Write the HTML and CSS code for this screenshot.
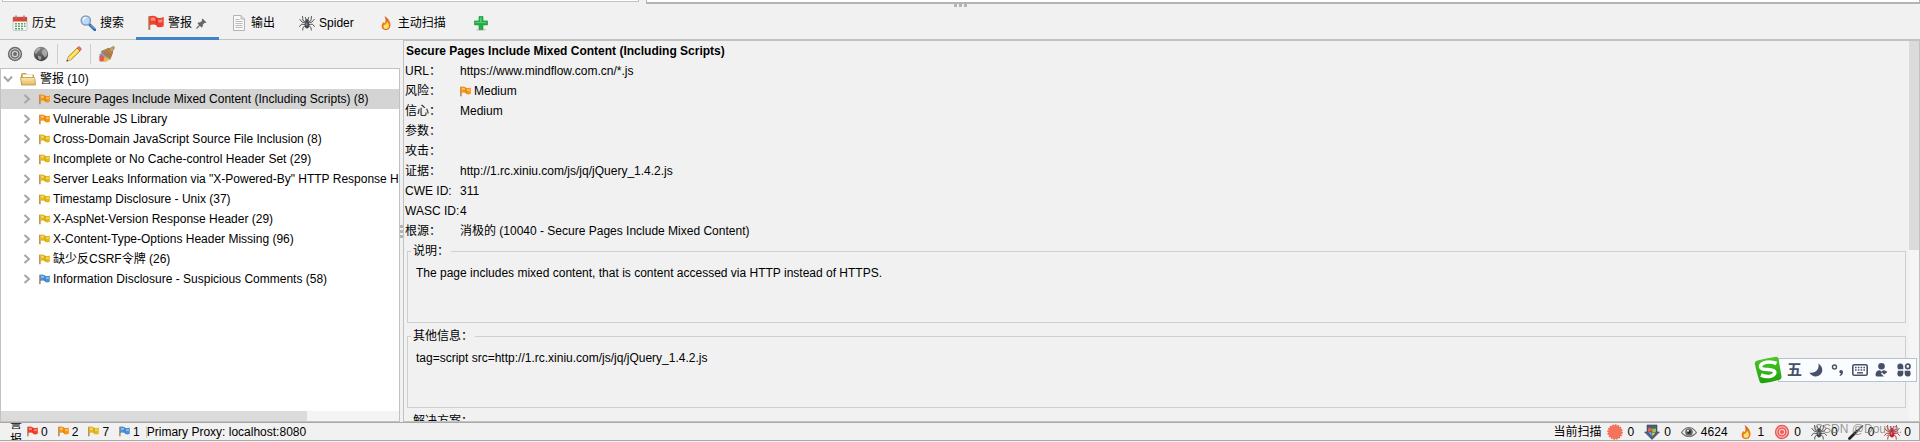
FILE: index.html
```
<!DOCTYPE html>
<html lang="zh-CN">
<head>
<meta charset="utf-8">
<title>警报</title>
<link rel="stylesheet" href="styles.css">
</head>
<body>
<svg class="defs" aria-hidden="true">
  <defs>
    <linearGradient id="g-fire" x1="0" y1="0" x2="0" y2="1"><stop offset="0" stop-color="#c8441c"/><stop offset=".5" stop-color="#f08418"/><stop offset="1" stop-color="#e85a10"/></linearGradient>
    <linearGradient id="g-grey" x1="0" y1="0" x2="0" y2="1"><stop offset="0" stop-color="#8a8a8a"/><stop offset="1" stop-color="#3c3c3c"/></linearGradient>
    <linearGradient id="g-ime" x1="0" y1="0" x2="0" y2="1"><stop offset="0" stop-color="#4cc828"/><stop offset="1" stop-color="#1fa00c"/></linearGradient>
    <linearGradient id="g-folder" x1="0" y1="0" x2="0" y2="1"><stop offset="0" stop-color="#fbe9ae"/><stop offset="1" stop-color="#e2bb5c"/></linearGradient>
    <symbol id="flag" viewBox="0 0 11 11">
      <path d="M.2.8v9.400h1.400V.8z" fill="#b07a48"/>
      <path class="flag-body" d="M1 .8Q3.500-.1 5.800 1.200v.6Q8.500 2.400 10.800 1.400V7.800Q8.500 9 6 8V6.900Q3.500 6.200 1 7z"/>
      <path d="M2 2q1.800-.5 3 .2v1.900q-1.500-.5-3 0zM7 3.200q1.500.3 2.800-.2v1.800q-1.300.5-2.800.2z" fill="#fff" opacity=".4"/>
      <path d="M5.900 1.500v6" stroke="#000" stroke-opacity=".18" stroke-width=".7"/>
    </symbol>
    <symbol id="spider" viewBox="0 0 16 16">
      <g fill="none" stroke="currentColor" stroke-width=".9"><path d="M6.500 7 4 5.500 3.500 1M9.500 7 12 5.500l.5-4.500M6.500 8 3 7 .5 4M9.500 8 13 7l2.500-3M6 9.500l-3.500-.3-2.200 2.600M10 9.500l3.500-.3 2.200 2.600M6.500 10.500 4 12.500l-.3 3M9.500 10.500l2.500 2 .3 3M7 4.500l-.8-2.500M9 4.500l.8-2.500"/></g>
      <ellipse cx="8" cy="10" rx="2.300" ry="3.400" fill="currentColor"/><circle cx="8" cy="5.800" r="1.900" fill="currentColor"/>
      <ellipse cx="7.500" cy="9.300" rx=".9" ry="1.500" fill="#fff" opacity=".35"/>
    </symbol>
    <symbol id="fire" viewBox="0 0 16 16">
      <path d="M6.500 1c3 2 6.500 5.500 6 9.500-.4 3-2.300 4.500-4.500 4.500-2.500 0-4.300-1.700-4.300-4.100 0-2 1-2.900 1.700-3.900l.9 1.300C8 6.500 8 3.500 6.500 1z" fill="url(#g-fire)"/>
      <path d="M9 6.500c1.200 2 2.300 3.500 1.800 5.300-.4 1.500-1.500 2.200-2.700 2.200-1.500 0-2.600-1-2.600-2.300 0-1 .4-1.500.8-2 1.400.6 2.500-1 2.700-3.200z" fill="#ffe66c"/>
    </symbol>
    <symbol id="target" viewBox="0 0 16 16">
      <circle cx="8" cy="8" r="7.200" fill="currentColor"/><circle cx="8" cy="8" r="5.200" fill="none" stroke="#fff" stroke-opacity=".7"/><circle cx="8" cy="8" r="2.600" fill="none" stroke="#fff" stroke-opacity=".7" stroke-width="1.200"/>
    </symbol>
    <symbol id="chevron" viewBox="0 0 8 10"><path d="M1.500 1 6 5 1.500 9" fill="none" stroke="#a6a6a6" stroke-width="2"/></symbol>
  </defs>
</svg>

<div class="upper">
  <div class="upper-left"></div>
  <div class="upper-right"></div>
</div>

<nav class="tabs">
  <span class="grip grip-h"></span>
  <button class="tab"><svg class="icon" viewBox="0 0 16 16"><rect x="1" y="2" width="14" height="13.500" rx="1" fill="#f7f7f7" stroke="#aaa" stroke-width=".6"/><path d="M1 2h14v4.500H1z" fill="#dd4434"/><path d="M4 .5v3M12 .5v3" stroke="#8b8b8b" stroke-width="1.500"/><path d="M3 8h2v1.600H3zM6 8h2v1.600H6zM9 8h2v1.600H9zM3 10.500h2v1.600H3zM6 10.500h2v1.600H6zM9 10.500h2v1.600H9zM12 8h1.500v1.600H12zM12 10.500h1.500v1.600H12zM3 13h2v1.400H3zM6 13h2v1.400H6zM9 13h2v1.400H9z" fill="#55a868"/></svg>历史</button>
  <button class="tab"><svg class="icon" viewBox="0 0 16 16"><path d="m9.500 9.500 5.300 5.200" stroke="#2f66ae" stroke-width="2.800" stroke-linecap="round"/><path d="m10.500 10 4 4" stroke="#8bb8ee"/><circle cx="5.800" cy="5.500" r="4.600" fill="#b7d9fa" stroke="#8b9db5" stroke-width="1.500"/><path d="M3 5.500c.2-2 1.500-3 3.200-2.800" stroke="#fff" stroke-width="1.300" fill="none"/></svg>搜索</button>
  <button class="tab active"><svg class="icon flag-red" viewBox="0 0 11 11"><use href="#flag"/></svg>警报<svg class="pin" viewBox="0 0 11 11"><path d="m6.500.5 4 4-1.200.5-1 .1-1.500 1.600-.1 2L5.500 9.500 1.500 5.500l.9-1 2-.2L6 2.800l-.1-1z" fill="#62676b"/><path d="M3.800 7.200.5 10.500" stroke="#62676b" stroke-width="1.200"/></svg></button>
  <button class="tab"><svg class="icon" viewBox="0 0 16 16"><path d="M2.500.5H10L13.500 4v11.500h-11z" fill="#f8f8f8" stroke="#b4b4b4"/><path d="M10 .5V4h3.500" fill="#ddd" stroke="#b4b4b4"/><path d="M4.500 4.500h4M4.500 6.500h7M4.500 8.500h7M4.500 10.500h7M4.500 12.500h7" stroke="#bdbdbd"/></svg>输出</button>
  <button class="tab"><svg class="icon dark"><use href="#spider"/></svg>Spider</button>
  <button class="tab"><svg class="icon"><use href="#fire"/></svg>主动扫描</button>
  <button class="tab tab-add" aria-label="添加"><svg class="icon" viewBox="0 0 16 16"><ellipse cx="8" cy="14.800" rx="5" ry="1" fill="#ccc"/><path d="M6 1.500h4v4.400h4.500v4H10v4.600H6V9.900H1.500v-4H6z" fill="#20b244" stroke="#188c34" stroke-width=".6"/><path d="M7 2.500h1.500V7H13v1H2.500V7H7z" fill="#7be08c" opacity=".6"/></svg></button>
</nav>

<main class="work">
  <section class="side">
    <div class="toolbar">
      <button class="tool" aria-label="范围"><svg class="icon grey"><use href="#target"/></svg></button>
      <button class="tool" aria-label="站点"><svg class="icon" viewBox="0 0 16 16"><circle cx="8" cy="8" r="7.200" fill="url(#g-grey)"/><path d="M3 3.500c1.500-1.500 3-2 4.500-1.500L6.800 4l-2 1.500L3.500 8 1.800 7zM9.500 4l3-1 1.800 3-.3 3-2 2.500L10 9 8.500 7zM5 9.500l3 1 .5 2L7 14.500 5 12z" fill="#bbb" opacity=".75"/></svg></button>
      <span class="sep"></span>
      <button class="tool" aria-label="编辑"><svg class="icon" viewBox="0 0 16 16"><path d="m.8 15.200 1.400-4.400L11 2l3 3-8.800 8.800z" fill="#f7d232" stroke="#a47a18" stroke-width=".7"/><path d="m3.500 12.300 8.800-8.800" stroke="#fff3a0" stroke-width="1.200"/><path d="m11 2 1.300-1.200c1-.7 3.500 1.500 2.800 2.800L14 5z" fill="#e47a70" stroke="#a04030" stroke-width=".5"/><path d="m.8 15.200 1.400-4.400 3 3z" fill="#efcfa0"/><path d="m.5 15.500.7-2 1.300 1.300z" fill="#333"/></svg></button>
      <span class="sep"></span>
      <button class="tool" aria-label="清除"><svg class="icon" viewBox="0 0 16 16"><path d="m.5 8 4-2.500 5 6L8 15l-3 .8L.5 14z" fill="#78a8e8"/><path d="m.5 10 2.500-1.500 2.500 3.500-1.500 3.500H.5z" fill="#f05a3c"/><path d="m5 12 3-1 2 3-2.500 1.500H5z" fill="#f4b040"/><path d="M2 5.500 9 2.500 13.500 7 11 13.500z" fill="#b98a4c" stroke="#866030" stroke-width=".6"/><path d="m4.500 5.500 6.500 5.500M7 4.500l5 5" stroke="#7d5830" stroke-width=".7"/><path d="m9 2.500 2.500-.3L14.500.3l1.200 1.200-2 3L13.500 7z" fill="#c9a063" stroke="#866030" stroke-width=".6"/></svg></button>
    </div>
    <div class="tree">
      <ul class="rows" role="tree">
        <li class="row root"><svg class="arrow open"><use href="#chevron"/></svg><svg class="folder" viewBox="0 0 16 14"><path d="M1.500 12.500V2.500q0-1 1-1H6l1.500 1.500h6v9z" fill="#dcb764" stroke="#b48a3c" stroke-width=".8"/><path d="M3 2.500h9.500V6H3z" fill="#fff"/><path d="M.5 5.500h13.300q1 0 1 1l.7 6.500H1.700z" fill="url(#g-folder)" stroke="#bd9345" stroke-width=".8"/></svg>警报 (10)</li>
        <li class="row selected"><svg class="arrow"><use href="#chevron"/></svg><svg class="flag flag-orange"><use href="#flag"/></svg>Secure Pages Include Mixed Content (Including Scripts) (8)</li>
        <li class="row"><svg class="arrow"><use href="#chevron"/></svg><svg class="flag flag-orange"><use href="#flag"/></svg>Vulnerable JS Library</li>
        <li class="row"><svg class="arrow"><use href="#chevron"/></svg><svg class="flag flag-yellow"><use href="#flag"/></svg>Cross-Domain JavaScript Source File Inclusion (8)</li>
        <li class="row"><svg class="arrow"><use href="#chevron"/></svg><svg class="flag flag-yellow"><use href="#flag"/></svg>Incomplete or No Cache-control Header Set (29)</li>
        <li class="row"><svg class="arrow"><use href="#chevron"/></svg><svg class="flag flag-yellow"><use href="#flag"/></svg>Server Leaks Information via "X-Powered-By" HTTP Response H</li>
        <li class="row"><svg class="arrow"><use href="#chevron"/></svg><svg class="flag flag-yellow"><use href="#flag"/></svg>Timestamp Disclosure - Unix (37)</li>
        <li class="row"><svg class="arrow"><use href="#chevron"/></svg><svg class="flag flag-yellow"><use href="#flag"/></svg>X-AspNet-Version Response Header (29)</li>
        <li class="row"><svg class="arrow"><use href="#chevron"/></svg><svg class="flag flag-yellow"><use href="#flag"/></svg>X-Content-Type-Options Header Missing (96)</li>
        <li class="row"><svg class="arrow"><use href="#chevron"/></svg><svg class="flag flag-yellow"><use href="#flag"/></svg>缺少反CSRF令牌 (26)</li>
        <li class="row"><svg class="arrow"><use href="#chevron"/></svg><svg class="flag flag-blue"><use href="#flag"/></svg>Information Disclosure - Suspicious Comments (58)</li>
      </ul>
      <div class="scroll-x"><div class="thumb-x"></div></div>
    </div>
  </section>
  <div class="divider"><span class="grip grip-v"></span></div>
  <section class="detail">
    <div class="detail-body">
      <h1 class="title">Secure Pages Include Mixed Content (Including Scripts)</h1>
      <dl class="props">
        <dt>URL：</dt><dd>https://www.mindflow.com.cn/*.js</dd>
        <dt>风险：</dt><dd><svg class="flag flag-orange"><use href="#flag"/></svg>Medium</dd>
        <dt>信心：</dt><dd>Medium</dd>
        <dt>参数：</dt><dd></dd>
        <dt>攻击：</dt><dd></dd>
        <dt>证据：</dt><dd>http://1.rc.xiniu.com/js/jq/jQuery_1.4.2.js</dd>
        <dt>CWE ID:</dt><dd>311</dd>
        <dt>WASC ID:</dt><dd>4</dd>
        <dt>根源：</dt><dd>消极的 (10040 - Secure Pages Include Mixed Content)</dd>
      </dl>
      <fieldset class="group"><legend>说明：</legend><p>The page includes mixed content, that is content accessed via HTTP instead of HTTPS.</p></fieldset>
      <fieldset class="group"><legend>其他信息：</legend><p>tag=script src=http://1.rc.xiniu.com/js/jq/jQuery_1.4.2.js</p></fieldset>
      <fieldset class="group"><legend>解决方案：</legend></fieldset>
    </div>
    <div class="scroll-y"><div class="thumb-y"></div></div>
  </section>
</main>

<footer class="status">
  <span class="label">警报</span>
  <span class="count"><svg class="flag flag-red"><use href="#flag"/></svg>0</span>
  <span class="count"><svg class="flag flag-orange"><use href="#flag"/></svg>2</span>
  <span class="count"><svg class="flag flag-yellow"><use href="#flag"/></svg>7</span>
  <span class="count"><svg class="flag flag-blue"><use href="#flag"/></svg>1</span>
  <span class="proxy">Primary Proxy: localhost:8080</span>
  <div class="scans">
    <span class="scan-label">当前扫描</span>
    <span class="scan"><svg class="icon" viewBox="0 0 16 16"><circle cx="8" cy="8" r="6.700" fill="#f4745c" stroke="#ee6a50" stroke-width="2" stroke-dasharray="1.700 .9"/><circle cx="8" cy="8" r="6.300" fill="#f5735a"/></svg>0</span>
    <span class="scan"><svg class="icon" viewBox="0 0 16 16"><path d="M3 1h10v7h2.500L8 15.500.5 8H3z" fill="#4e5e74" stroke="#36445a" stroke-width=".6"/><path d="M4 4.500q2-1.200 3.600-.3v3.400q-1.800-.7-3.600.2z" fill="#f0623a"/><path d="M8.200 4.400q1.800.7 3.800-.2v3.500q-2 1-3.800.1z" fill="#8ccb4a"/><path d="M4.500 8.400q1.600-.7 3.100-.1v4z" fill="#4ea6ec"/><path d="M8.200 8.400q1.700.7 3.400 0l-3.400 4z" fill="#f8c838"/></svg>0</span>
    <span class="scan"><svg class="icon" viewBox="0 0 16 16"><path d="M.5 8.500Q4 3.500 8 3.500t7.500 5Q12 12.500 8 12.500T.5 8.500z" fill="#eee" stroke="#777" stroke-width="1.200"/><circle cx="8" cy="8" r="3.800" fill="#666"/><circle cx="8" cy="8" r="1.800" fill="#222"/><circle cx="7" cy="6.800" r="1" fill="#fff"/></svg>4624</span>
    <span class="scan"><svg class="icon"><use href="#fire"/></svg>1</span>
    <span class="scan"><svg class="icon red"><use href="#target"/></svg>0</span>
    <span class="scan"><svg class="icon dark"><use href="#spider"/></svg>0</span>
    <span class="scan"><svg class="icon" viewBox="0 0 16 16"><path d="M1.500 14.500 9 7" stroke="#222" stroke-width="2.800" stroke-linecap="round"/><path d="m9 7 6-5.500" stroke="#555" stroke-width="1.500"/><path d="m7.500 7 1.700 1.800" stroke="#aaa"/></svg>0</span>
    <span class="scan"><svg class="icon crimson"><use href="#spider"/></svg>0</span>
  </div>
</footer>

<div class="watermark">CSDN @Douya.</div>

<div class="ime">
  <svg class="ime-logo" viewBox="0 0 28 28"><path d="M3.500 4.500Q12 2.500 22 .8q2-.3 2.500 1.700l3 18q.3 2.500-2 3.300-8 2.500-17 3.400-2.500.3-3-2Q2.500 16 .8 8 .5 5.300 3.500 4.500z" fill="url(#g-ime)"/><path d="M22.500 7.500Q16 4.800 9.500 7q-3.500 1.700-2.800 4.300.8 2 7.300 2.200 6.500.3 6.800 2.700.2 2.800-4.300 4-4.500 1-9.500-1.200" fill="none" stroke="#fff" stroke-width="3.600"/></svg>
  <div class="ime-bar">
    <span class="ime-mode">五</span>
    <svg class="icon" viewBox="0 0 16 16"><path d="M10.500 1.500c5 3.500 5 9.500.5 12-3.500 2-8 .5-9.500-3 5.500 1.200 10-2.500 9-9z" fill="#46506a"/></svg>
    <svg class="icon" viewBox="0 0 16 16"><circle cx="4.500" cy="5" r="2" fill="none" stroke="#46506a" stroke-width="1.400"/><path d="M9.500 8.800c.8-1.500 3.500-1 3.500 1.200 0 2-1.200 3.500-3 4l-.5-.8q1.200-.6 1.400-1.800c-1.200.2-2-1.400-1.400-2.600z" fill="#46506a"/></svg>
    <svg class="icon" viewBox="0 0 16 16"><rect x=".8" y="2.800" width="14.400" height="10.400" rx="1.500" fill="#fff" stroke="#46506a" stroke-width="1.600"/><path d="M3 5.500h10M3 8h10" stroke="#46506a" stroke-width="1.400" stroke-dasharray="1.600 1.200"/><path d="M5 10.800h6" stroke="#46506a" stroke-width="1.400"/></svg>
    <svg class="icon" viewBox="0 0 16 16"><circle cx="7.500" cy="4.300" r="3.300" fill="#46506a"/><path d="M1.500 12.500Q2 8 6 8.200l1.500 1.500L9 8.200q4 0 4.500 2.800l-4 3.500H3q-1.500 0-1.500-2z" fill="#46506a"/><path d="m7.500 11 2.500 2.500 4.500-3.500" fill="none" stroke="#fff" stroke-width="1.500"/></svg>
    <svg class="icon" viewBox="0 0 16 16"><path d="M2 7.300Q1 5 1.500 3q1-1.800 3-1.500 2.800.3 2.800 3v2.800zM2 8.700Q1 11 1.500 13q1 1.800 3 1.500 2.800-.3 2.800-3V8.700zM14 8.700q1 2.300.5 4.300-1 1.800-3 1.500-2.800-.3-2.800-3V8.700z" fill="#46506a"/><circle cx="11.800" cy="4.400" r="2.200" fill="none" stroke="#46506a" stroke-width="1.700"/></svg>
  </div>
</div>
</body>
</html>
```
FILE: styles.css
```
* { box-sizing: border-box; }

body {
  margin: 0;
  height: 100vh;
  display: flex;
  flex-direction: column;
  overflow: hidden;
  position: relative;
  background: #f1f1f1;
  color: #000;
  font: 12px/20px "Liberation Sans", Arial, "Noto Sans CJK SC", sans-serif;
}

button {
  border: 0;
  padding: 0;
  background: none;
  color: inherit;
  font: inherit;
}

svg { flex: none; display: block; }
.defs { position: absolute; width: 0; height: 0; }
.icon { width: 16px; height: 16px; }
.flag { width: 11px; height: 11px; }

.flag-red { --flag: #f2402c; }
.flag-orange { --flag: #f79410; }
.flag-yellow { --flag: #e6b818; }
.flag-blue { --flag: #4a90d8; }
.flag-body { fill: var(--flag); }
.dark { color: #45494d; }
.grey { color: #6c6c6c; }
.red { color: #ee5a56; }
.crimson { color: #c8202c; }

/* bottom edge of the panels above */
.upper { display: flex; gap: 7px; height: 4px; }
.upper-left {
  flex: 0 0 33.2%;
  height: 2px;
  margin-left: 2px;
  background: #fff;
  border: 1px solid #c2c2c2;
  border-top: 0;
}
.upper-right {
  flex: 1;
  background: #fff;
  border: solid #b4b4b4;
  border-width: 0 1px 2px;
}

/* tabs */
.tabs {
  display: flex;
  height: 36px;
  border-bottom: 1px solid #c2c2c2;
  position: relative;
}
.tab {
  display: flex;
  align-items: center;
  gap: 4px;
  height: 36px;
  padding: 5px 12px 0;
  border-bottom: 3px solid transparent;
}
.tab.active { border-bottom-color: #4083c9; }
.tab-add { padding-left: 15px; }
.pin { width: 11px; height: 11px; }

.grip { display: block; background-color: transparent; }
.grip-h {
  position: absolute;
  left: 50%;
  top: 0;
  width: 13px;
  height: 3px;
  margin-left: -6px;
  background: repeating-linear-gradient(90deg, #b4b4b4 0 3px, transparent 3px 5px);
}
.grip-v {
  width: 3px;
  height: 13px;
  background: repeating-linear-gradient(#b4b4b4 0 3px, transparent 3px 5px);
}

/* split area */
.work { flex: 1; min-height: 0; display: flex; }
.side { flex: 0 0 400px; min-width: 0; display: flex; flex-direction: column; }
.toolbar { display: flex; align-items: center; gap: 8px; height: 28px; padding-left: 6px; }
.tool { width: 18px; display: flex; justify-content: center; }
.sep { width: 1px; height: 20px; margin: 0 -1px; background: #cdcdcd; }

.tree {
  flex: 1;
  min-height: 0;
  display: flex;
  flex-direction: column;
  background: #fff;
  border: 1px solid #c2c2c2;
}
.rows { flex: 1; min-height: 0; margin: 0; padding: 0; list-style: none; overflow: hidden; }
.row {
  display: flex;
  align-items: center;
  gap: 3px;
  height: 20px;
  padding-left: 22px;
  white-space: nowrap;
}
.row.root { padding-left: 3px; gap: 4px; }
.row.selected { background: #d4d4d4; }
.arrow { width: 8px; height: 10px; margin-right: 5px; }
.root .arrow { margin-right: 4px; }
.arrow.open { transform: rotate(90deg); }
.folder { width: 16px; height: 14px; }
.scroll-x { height: 10px; background: #f4f4f4; }
.thumb-x { width: 77%; height: 100%; background: #dbdbdb; }

.divider { flex: 0 0 3px; display: flex; align-items: center; }

.detail {
  flex: 1;
  min-width: 0;
  display: flex;
  border: 1px solid #c2c2c2;
}
.detail-body { flex: 1; min-width: 0; overflow: hidden; padding-right: 3px; }
.title { margin: 0; padding-left: 2px; font-size: 12px; line-height: 20px; }
.props {
  display: grid;
  grid-template-columns: 55px 1fr;
  grid-auto-rows: 20px;
  margin: 0;
  padding-left: 1px;
}
.props dt { white-space: nowrap; }
.props dd { margin: 0; display: flex; align-items: center; gap: 3px; }
.group {
  height: 82px;
  margin: 0 0 3px 3px;
  padding: 2px 8px 0;
  border: 1px solid #cfcfcf;
}
.group legend { margin-left: -5px; padding: 0 2px; }
.group p { margin: 0; }
.scroll-y { flex: 0 0 10px; background: #f5f5f5; }
.thumb-y { height: 55%; background: #dbdbdb; }

/* status bar */
.status {
  display: flex;
  align-items: center;
  height: 19px;
  margin-bottom: 1px;
  padding: 0 8px 0 10px;
  border: 1px solid #a9a9a9;
  border-left: 0;
  overflow: hidden;
}
.label { width: 12px; margin-right: 5px; line-height: 16px; word-break: break-all; }
.count { display: flex; align-items: center; gap: 3px; margin-right: 10px; }
.proxy { margin-left: -4px; padding-left: 1px; background: linear-gradient(#ccc, #ccc) 0 50% / 1px 12px no-repeat; }
.scans { display: flex; align-items: center; gap: 10px; margin-left: auto; }
.scan-label { margin-right: -4px; }
.scan { display: flex; align-items: center; gap: 4px; }

.watermark {
  position: absolute;
  right: 18px;
  bottom: 3px;
  color: rgba(120, 120, 120, .75);
  font-size: 12px;
}

/* floating input-method bar */
.ime {
  position: absolute;
  right: 3px;
  bottom: 58px;
  display: flex;
  align-items: center;
}
.ime-logo { width: 28px; height: 28px; margin-right: -4px; z-index: 1; }
.ime-bar {
  display: flex;
  align-items: center;
  gap: 6px;
  height: 24px;
  padding: 0 4px 0 8px;
  background: #fbfcfe;
  border: 1px solid #b5c4d4;
}
.ime-mode { color: #46506a; font-size: 15px; font-weight: 700; }
```
